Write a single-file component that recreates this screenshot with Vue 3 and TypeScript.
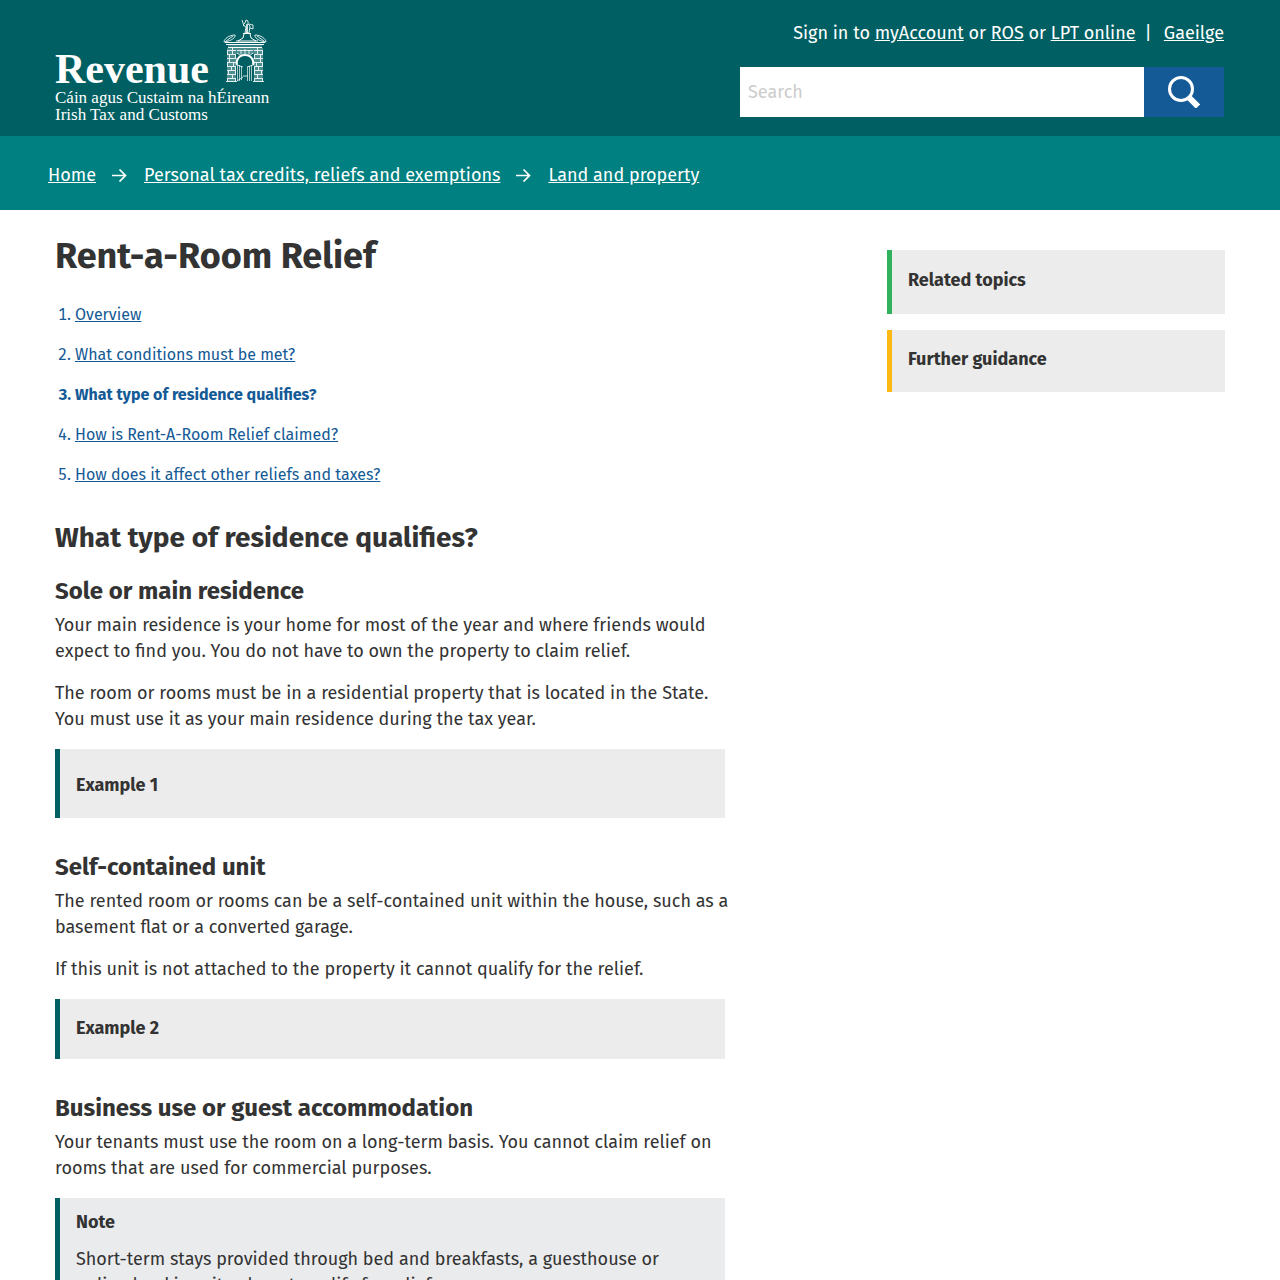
<script setup lang="ts">
import { ref } from 'vue'

interface Step {
  label: string
  current?: boolean
}

const query = ref('')

const crumbs: string[] = ['Home', 'Personal tax credits, reliefs and exemptions', 'Land and property']

const steps: Step[] = [
  { label: 'Overview' },
  { label: 'What conditions must be met?' },
  { label: 'What type of residence qualifies?', current: true },
  { label: 'How is Rent-A-Room Relief claimed?' },
  { label: 'How does it affect other reliefs and taxes?' },
]

const courses: number[] = [31, 35, 39, 43, 47, 51, 55, 59]
</script>

<template>
  <div class="page">
    <header class="masthead">
      <div class="container masthead-row">
        <a class="logo" href="#" aria-label="Revenue home">
          <span class="logo-top">
            <span class="logo-name">Revenue</span>
            <svg class="arch" viewBox="0 0 44 64" width="44" height="64" fill="none" stroke="#fff" aria-hidden="true">
              <path d="M22 4l1-3 2 1 0 3 2 2-1 7h-4l1-6-3-2zM19 1l2 6M26 5l4 1 0 4-3-1" stroke-width="1" opacity=".85" />
              <path d="M23 5h2v9h-2z" fill="#fff" stroke="none" opacity=".8" />
              <path d="M20 14.500h8M21 15l-1 4-5 3M27 15l1 4 5 3M13 22h22" stroke-width="1" />
              <path d="M1 23c0-3 5-7 11-7 1 2-3 6-11 7zM43 23c0-3-5-7-11-7-1 2 3 6 11 7zM3 22l7-5M41 22l-7-5" stroke-width="1" opacity=".85" />
              <path d="M2 23.500h40M3 25.500h38M5 28.500h34" stroke-width="1" />
              <path d="M5 27h34" stroke-width="1" opacity=".45" />
              <path d="M4 29h9v34h-9zM31 29h9v34h-9zM13 29h18v6h-18z" fill="#fff" stroke="none" opacity=".3" />
              <g stroke-width="1" opacity=".85">
                <path v-for="y in courses" :key="y" :d="`M4 ${y}.5h9M31 ${y}.5h9`" />
                <path d="M4.500 31v4M9.500 29v6M12.500 35v4M6.500 35v8M10.500 43v4M4.500 43v4M8.500 47v4M12.500 47v8M5.500 51v4M9.500 55v4M4.500 59v4M12.500 59v4" />
                <path d="M39.500 31v4M34.500 29v6M31.500 35v4M37.500 35v8M33.500 43v4M39.500 43v4M35.500 47v4M31.500 47v8M38.500 51v4M34.500 55v4M39.500 59v4M31.500 59v4" />
                <path d="M3 62.500h11M30 62.500h11" />
              </g>
              <path d="M14 46c-1-2 0-10 8-10s9 8 8 10" stroke-width="2" />
              <path d="M14 31.500h16M14 34l4 3M18 31v5M22 30v6M26 31v5M30 34l-4 3M13 40h2M29 40h2" stroke-width="1" opacity=".8" />
              <path d="M14.500 46v16M16.500 46v16M18.500 47v14M24.500 48v14M26.500 47v15M28.500 46v16" stroke-width="1" opacity=".65" />
              <path d="M14 46l6 2M30 46l-6 2M14 62l6-4M20 57h5" stroke-width="1" opacity=".8" />
            </svg>
          </span>
          <span class="logo-line">Cáin agus Custaim na hÉireann</span>
          <span class="logo-line">Irish Tax and Customs</span>
        </a>
        <div class="tools">
          <p class="signin">
            Sign in to <a href="#">myAccount</a> or <a href="#">ROS</a> or <a href="#">LPT online</a>
            <span class="divider">|</span><a href="#">Gaeilge</a>
          </p>
          <form class="search" role="search" @submit.prevent>
            <input v-model="query" type="text" placeholder="Search" aria-label="Search" />
            <button type="submit" aria-label="Search">
              <svg viewBox="0 0 32 32" width="32" height="32" fill="none" stroke="#fff" aria-hidden="true">
                <circle cx="13" cy="13" r="11.500" stroke-width="3" />
                <path d="M20 20.500l10 10" stroke-width="6" />
              </svg>
            </button>
          </form>
        </div>
      </div>
    </header>

    <nav class="crumbs" aria-label="Breadcrumb">
      <ol>
        <li v-for="(crumb, i) in crumbs" :key="crumb">
          <svg v-if="i > 0" viewBox="0 0 16 14" width="16" height="14" fill="none" stroke="#fff" stroke-width="1.700" aria-hidden="true">
            <path d="M1 7.500h13M8.500 1.500l6 6-6 6" />
          </svg>
          <a href="#">{{ crumb }}</a>
        </li>
      </ol>
    </nav>

    <div class="container columns">
      <main>
        <h1>Rent-a-Room Relief</h1>
        <ol class="steps">
          <li v-for="step in steps" :key="step.label" :class="{ current: step.current }">
            <template v-if="step.current">{{ step.label }}</template>
            <a v-else href="#">{{ step.label }}</a>
          </li>
        </ol>

        <h2>What type of residence qualifies?</h2>

        <h3>Sole or main residence</h3>
        <p>Your main residence is your home for most of the year and where friends would <br />expect to find you. You do not have to own the property to claim relief.</p>
        <p>The room or rooms must be in a residential property that is located in the State. <br />You must use it as your main residence during the tax year.</p>
        <section class="panel tall"><h4>Example 1</h4></section>

        <h3>Self-contained unit</h3>
        <p>The rented room or rooms can be a self-contained unit within the house, such as a <br />basement flat or a converted garage.</p>
        <p>If this unit is not attached to the property it cannot qualify for the relief.</p>
        <section class="panel"><h4>Example 2</h4></section>

        <h3>Business use or guest accommodation</h3>
        <p>Your tenants must use the room on a long-term basis. You cannot claim relief on <br />rooms that are used for commercial purposes.</p>
        <section class="panel note">
          <h4>Note</h4>
          <p>Short-term stays provided through bed and breakfasts, a guesthouse or <br />online booking site, do not qualify for relief.</p>
        </section>
      </main>

      <aside>
        <section class="panel related"><h4>Related topics</h4></section>
        <section class="panel guidance"><h4>Further guidance</h4></section>
      </aside>
    </div>
  </div>
</template>

<style>
body {
  margin: 0;
  background: #fff;
}
</style>

<style scoped>
.page {
  color: #333;
  font-family: "Fira Sans", "Noto Sans", sans-serif;
  font-size: 18px;
  line-height: 26px;
}
h1, h2, h3, h4, p, ol {
  margin: 0;
  padding: 0;
}
.container {
  box-sizing: border-box;
  max-width: 1280px;
  margin: 0 auto;
  padding: 0 55px;
}
.masthead {
  background: #005f62;
  color: #fff;
}
.masthead-row {
  display: flex;
  justify-content: space-between;
  align-items: flex-start;
  padding: 0 56px 13px 55px;
}
.masthead a {
  color: #fff;
}
.logo {
  display: flex;
  flex-direction: column;
  padding-top: 19px;
  font-family: "Liberation Serif", serif;
  text-decoration: none;
}
.logo-top {
  display: flex;
  align-items: flex-start;
  gap: 14px;
  height: 69px;
  margin-bottom: 1px;
}
.logo-name {
  align-self: flex-end;
  font-size: 42px;
  font-weight: 700;
  line-height: 37px;
}
.arch {
  display: block;
}
.logo-line {
  font-size: 17px;
  line-height: 17px;
}
.tools {
  width: 484px;
  padding-top: 20px;
}
.signin {
  margin-bottom: 21px;
  text-align: right;
  white-space: nowrap;
}
.divider {
  margin: 0 12px 0 9px;
}
.search {
  display: flex;
  height: 50px;
}
.search input {
  flex: 1;
  min-width: 0;
  padding: 0 8px;
  border: 0;
  border-radius: 0;
  background: #fff;
  color: #333;
  font: inherit;
}
.search input::placeholder {
  color: #ccc;
  opacity: 1;
}
.search button {
  display: flex;
  align-items: center;
  justify-content: center;
  width: 80px;
  padding: 0;
  border: 0;
  background: #145a96;
}
.crumbs {
  padding: 26px 48px 22px;
  background: #008080;
}
.crumbs ol {
  display: flex;
  list-style: none;
}
.crumbs li {
  display: flex;
  align-items: center;
}
.crumbs svg {
  margin: 0 17px 0 15px;
}
.crumbs a {
  color: #fff;
}
.columns {
  display: flex;
  justify-content: space-between;
  align-items: flex-start;
}
main {
  width: 670px;
  padding-top: 24px;
}
h1 {
  font-size: 36px;
  line-height: 44px;
}
.steps {
  margin: 25px 0 33px;
  padding-left: 20px;
  color: #145a96;
  font-size: 16px;
  line-height: 24px;
}
.steps li + li {
  margin-top: 16px;
}
.steps a {
  color: inherit;
}
.current {
  font-weight: 700;
}
h2 {
  margin-bottom: 21px;
  font-size: 28px;
  line-height: 36px;
}
h3 {
  margin-bottom: 7px;
  font-size: 24px;
  line-height: 28px;
}
main > p {
  margin-bottom: 16px;
  white-space: nowrap;
}
.panel {
  margin: 17px 0 35px;
  padding: 16px 16px 18px;
  border-left: 5px solid #005f62;
  background: #ececec;
}
.panel h4 {
  font-size: 18px;
}
.tall {
  padding: 23px 16px 20px;
}
.note {
  margin-bottom: 0;
  padding-top: 11px;
  background: #eaebed;
}
.note h4 {
  margin-bottom: 11px;
}
aside {
  width: 338px;
  padding-top: 40px;
}
aside .panel {
  margin: 0 0 16px;
}
aside .related {
  padding: 17px 16px 21px;
  border-color: #2fb25b;
}
aside .guidance {
  padding-bottom: 20px;
  border-color: #fdb913;
}
</style>
